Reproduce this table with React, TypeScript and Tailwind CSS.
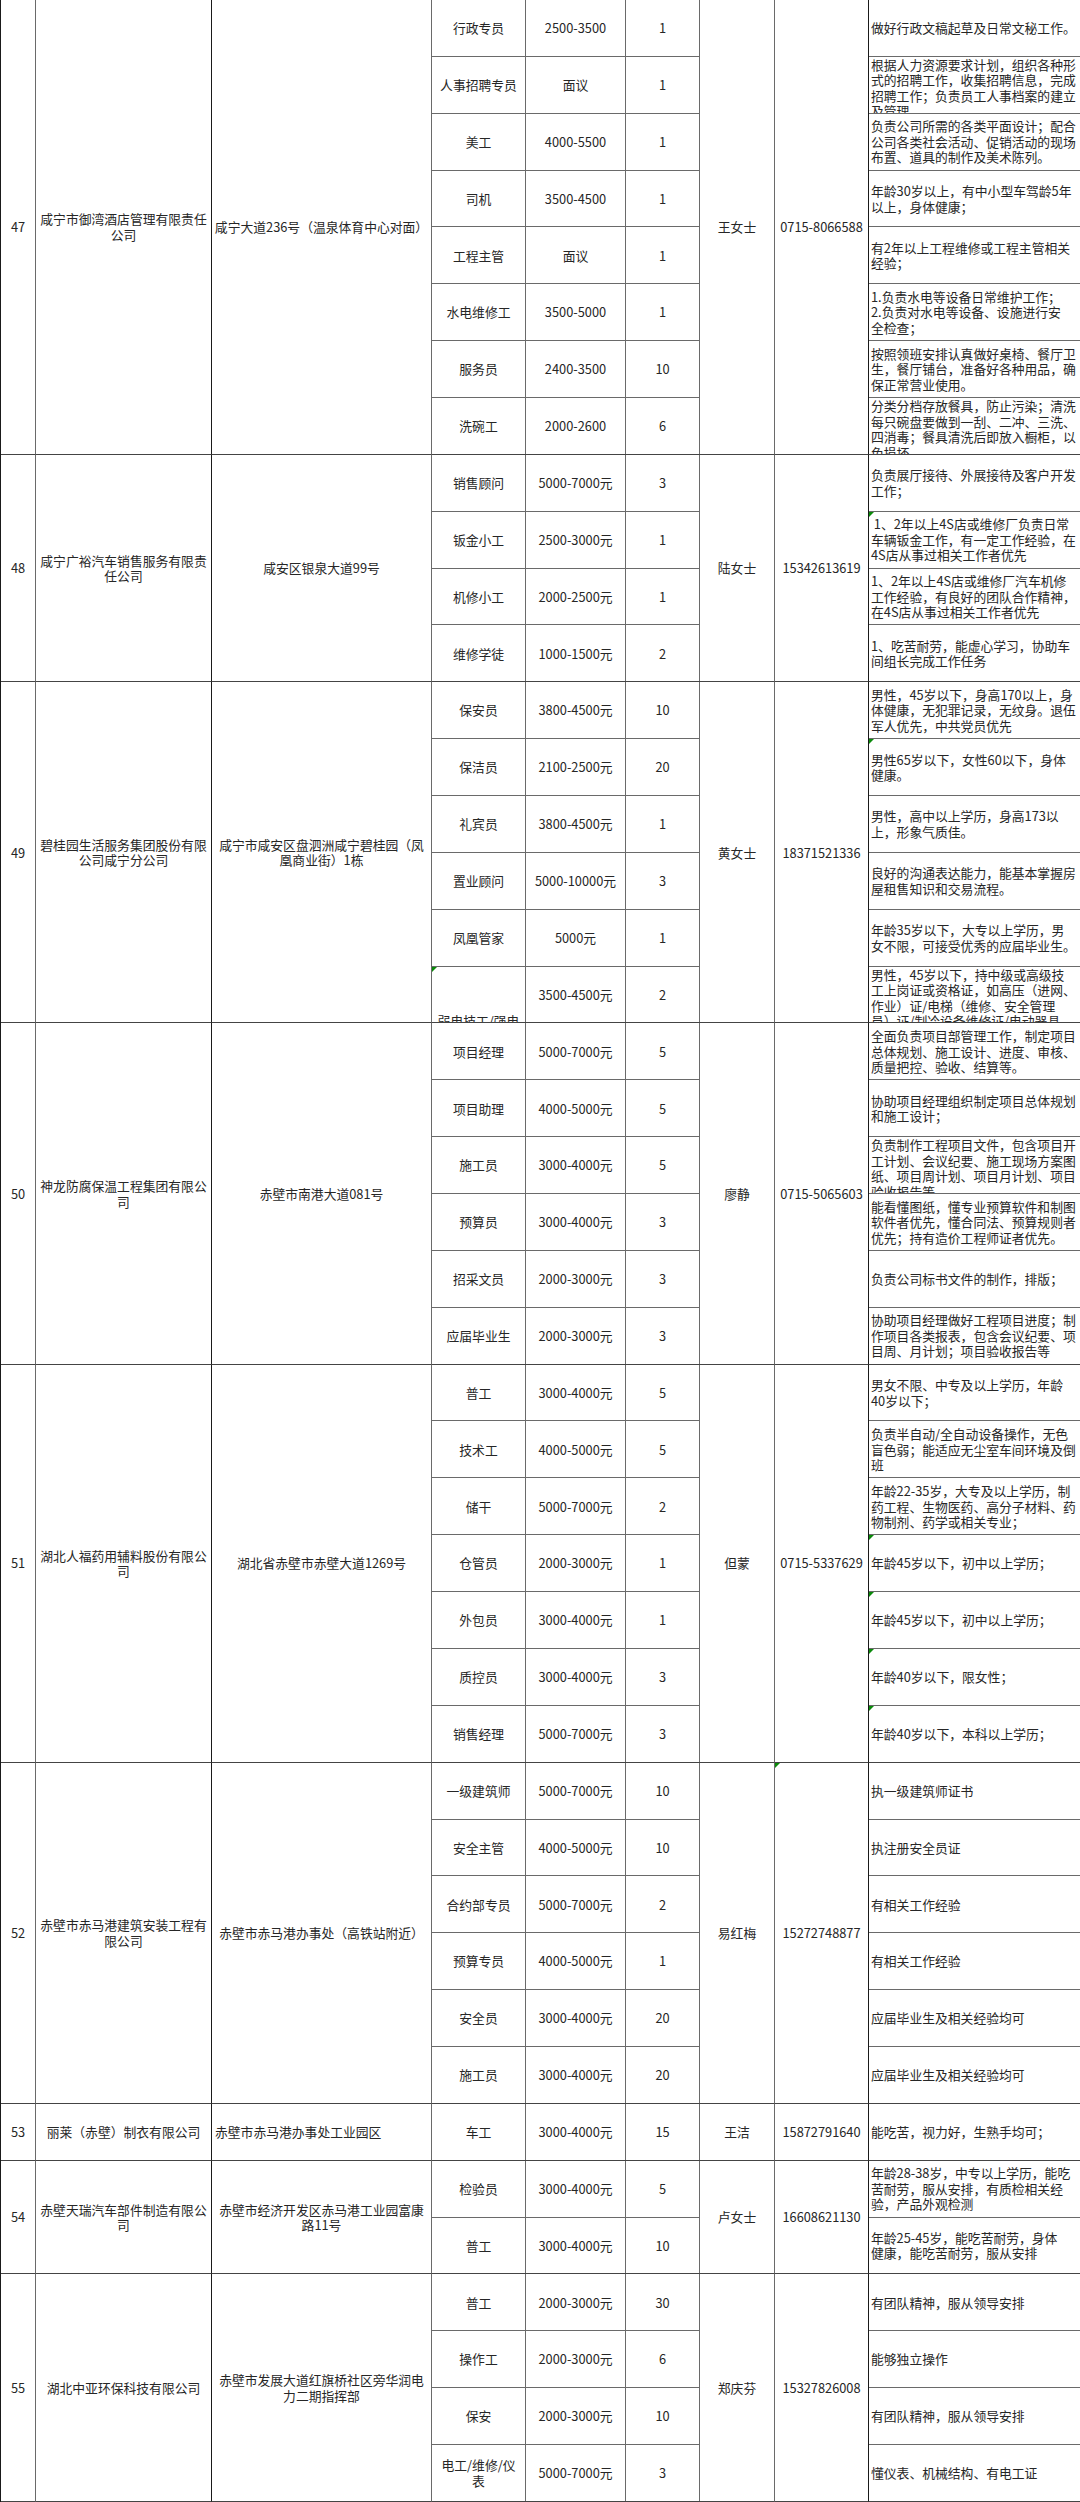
type Job = {
  title: string;
  pay: string;
  num: string;
  req: string;
  mark?: boolean;
  titleMark?: boolean;
  titleLow?: boolean;
};

type Company = {
  no: string;
  name: string;
  addr: string;
  addrLeft?: boolean;
  contact: string;
  phone: string;
  phoneMark?: boolean;
  jobs: Job[];
};

const companies: Company[] = [
  {
    no: '47',
    name: '咸宁市御湾酒店管理有限责任\n公司',
    addr: '咸宁大道236号（温泉体育中心对面）',
    contact: '王女士',
    phone: '0715-8066588',
    jobs: [
      { title: '行政专员', pay: '2500-3500', num: '1', req: '做好行政文稿起草及日常文秘工作。' },
      {
        title: '人事招聘专员',
        pay: '面议',
        num: '1',
        req: '根据人力资源要求计划，组织各种形\n式的招聘工作，收集招聘信息，完成\n招聘工作；负责员工人事档案的建立\n及管理。',
      },
      {
        title: '美工',
        pay: '4000-5500',
        num: '1',
        req: '负责公司所需的各类平面设计；配合\n公司各类社会活动、促销活动的现场\n布置、道具的制作及美术陈列。',
      },
      { title: '司机', pay: '3500-4500', num: '1', req: '年龄30岁以上，有中小型车驾龄5年\n以上，身体健康；' },
      { title: '工程主管', pay: '面议', num: '1', req: '有2年以上工程维修或工程主管相关\n经验；' },
      {
        title: '水电维修工',
        pay: '3500-5000',
        num: '1',
        req: '1.负责水电等设备日常维护工作；\n2.负责对水电等设备、设施进行安\n全检查；',
      },
      {
        title: '服务员',
        pay: '2400-3500',
        num: '10',
        req: '按照领班安排认真做好桌椅、餐厅卫\n生，餐厅铺台，准备好各种用品，确\n保正常营业使用。',
      },
      {
        title: '洗碗工',
        pay: '2000-2600',
        num: '6',
        req: '分类分档存放餐具，防止污染；清洗\n每只碗盘要做到一刮、二冲、三洗、\n四消毒；餐具清洗后即放入橱柜，以\n免损坏。',
      },
    ],
  },
  {
    no: '48',
    name: '咸宁广裕汽车销售服务有限责\n任公司',
    addr: '咸安区银泉大道99号',
    contact: '陆女士',
    phone: '15342613619',
    jobs: [
      { title: '销售顾问', pay: '5000-7000元', num: '3', req: '负责展厅接待、外展接待及客户开发\n工作；' },
      {
        title: '钣金小工',
        pay: '2500-3000元',
        num: '1',
        mark: true,
        req: '\u00a01、2年以上4S店或维修厂负责日常\n车辆钣金工作，有一定工作经验，在\n4S店从事过相关工作者优先',
      },
      {
        title: '机修小工',
        pay: '2000-2500元',
        num: '1',
        req: '1、2年以上4S店或维修厂汽车机修\n工作经验，有良好的团队合作精神，\n在4S店从事过相关工作者优先',
      },
      { title: '维修学徒', pay: '1000-1500元', num: '2', req: '1、吃苦耐劳，能虚心学习，协助车\n间组长完成工作任务' },
    ],
  },
  {
    no: '49',
    name: '碧桂园生活服务集团股份有限\n公司咸宁分公司',
    addr: '咸宁市咸安区盘泗洲咸宁碧桂园（凤\n凰商业街）1栋',
    contact: '黄女士',
    phone: '18371521336',
    jobs: [
      {
        title: '保安员',
        pay: '3800-4500元',
        num: '10',
        req: '男性，45岁以下，身高170以上，身\n体健康，无犯罪记录，无纹身。退伍\n军人优先，中共党员优先',
      },
      { title: '保洁员', pay: '2100-2500元', num: '20', mark: true, req: '男性65岁以下，女性60以下，身体\n健康。' },
      { title: '礼宾员', pay: '3800-4500元', num: '1', req: '男性，高中以上学历，身高173以\n上，形象气质佳。' },
      { title: '置业顾问', pay: '5000-10000元', num: '3', req: '良好的沟通表达能力，能基本掌握房\n屋租售知识和交易流程。' },
      { title: '凤凰管家', pay: '5000元', num: '1', req: '年龄35岁以下，大专以上学历，男\n女不限，可接受优秀的应届毕业生。' },
      {
        title: '弱电技工/强电\n工',
        pay: '3500-4500元',
        num: '2',
        titleMark: true,
        titleLow: true,
        req: '男性，45岁以下，持中级或高级技\n工上岗证或资格证，如高压（进网、\n作业）证/电梯（维修、安全管理\n员）证/制冷设备维修证/电动器具\n维修证优先。',
      },
    ],
  },
  {
    no: '50',
    name: '神龙防腐保温工程集团有限公\n司',
    addr: '赤壁市南港大道081号',
    contact: '廖静',
    phone: '0715-5065603',
    jobs: [
      {
        title: '项目经理',
        pay: '5000-7000元',
        num: '5',
        req: '全面负责项目部管理工作，制定项目\n总体规划、施工设计、进度、审核、\n质量把控、验收、结算等。',
      },
      { title: '项目助理', pay: '4000-5000元', num: '5', req: '协助项目经理组织制定项目总体规划\n和施工设计；' },
      {
        title: '施工员',
        pay: '3000-4000元',
        num: '5',
        req: '负责制作工程项目文件，包含项目开\n工计划、会议纪要、施工现场方案图\n纸、项目周计划、项目月计划、项目\n验收报告等。',
      },
      {
        title: '预算员',
        pay: '3000-4000元',
        num: '3',
        req: '能看懂图纸，懂专业预算软件和制图\n软件者优先，懂合同法、预算规则者\n优先；持有造价工程师证者优先。',
      },
      { title: '招采文员', pay: '2000-3000元', num: '3', req: '负责公司标书文件的制作，排版；' },
      {
        title: '应届毕业生',
        pay: '2000-3000元',
        num: '3',
        req: '协助项目经理做好工程项目进度；制\n作项目各类报表，包含会议纪要、项\n目周、月计划；项目验收报告等',
      },
    ],
  },
  {
    no: '51',
    name: '湖北人福药用辅料股份有限公\n司',
    addr: '湖北省赤壁市赤壁大道1269号',
    contact: '但蒙',
    phone: '0715-5337629',
    jobs: [
      { title: '普工', pay: '3000-4000元', num: '5', req: '男女不限、中专及以上学历，年龄\n40岁以下；' },
      {
        title: '技术工',
        pay: '4000-5000元',
        num: '5',
        req: '负责半自动/全自动设备操作，无色\n盲色弱；能适应无尘室车间环境及倒\n班',
      },
      {
        title: '储干',
        pay: '5000-7000元',
        num: '2',
        req: '年龄22-35岁，大专及以上学历，制\n药工程、生物医药、高分子材料、药\n物制剂、药学或相关专业；',
      },
      { title: '仓管员', pay: '2000-3000元', num: '1', mark: true, req: '年龄45岁以下，初中以上学历；' },
      { title: '外包员', pay: '3000-4000元', num: '1', mark: true, req: '年龄45岁以下，初中以上学历；' },
      { title: '质控员', pay: '3000-4000元', num: '3', mark: true, req: '年龄40岁以下，限女性；' },
      { title: '销售经理', pay: '5000-7000元', num: '3', mark: true, req: '年龄40岁以下，本科以上学历；' },
    ],
  },
  {
    no: '52',
    name: '赤壁市赤马港建筑安装工程有\n限公司',
    addr: '赤壁市赤马港办事处（高铁站附近）',
    contact: '易红梅',
    phone: '15272748877',
    phoneMark: true,
    jobs: [
      { title: '一级建筑师', pay: '5000-7000元', num: '10', req: '执一级建筑师证书' },
      { title: '安全主管', pay: '4000-5000元', num: '10', req: '执注册安全员证' },
      { title: '合约部专员', pay: '5000-7000元', num: '2', req: '有相关工作经验' },
      { title: '预算专员', pay: '4000-5000元', num: '1', req: '有相关工作经验' },
      { title: '安全员', pay: '3000-4000元', num: '20', req: '应届毕业生及相关经验均可' },
      { title: '施工员', pay: '3000-4000元', num: '20', req: '应届毕业生及相关经验均可' },
    ],
  },
  {
    no: '53',
    name: '丽莱（赤壁）制衣有限公司',
    addr: '赤壁市赤马港办事处工业园区',
    addrLeft: true,
    contact: '王洁',
    phone: '15872791640',
    jobs: [{ title: '车工', pay: '3000-4000元', num: '15', req: '能吃苦，视力好，生熟手均可；' }],
  },
  {
    no: '54',
    name: '赤壁天瑞汽车部件制造有限公\n司',
    addr: '赤壁市经济开发区赤马港工业园富康\n路11号',
    contact: '卢女士',
    phone: '16608621130',
    jobs: [
      {
        title: '检验员',
        pay: '3000-4000元',
        num: '5',
        req: '年龄28-38岁，中专以上学历，能吃\n苦耐劳，服从安排，有质检相关经\n验，产品外观检测',
      },
      { title: '普工', pay: '3000-4000元', num: '10', req: '年龄25-45岁，能吃苦耐劳，身体\n健康，能吃苦耐劳，服从安排' },
    ],
  },
  {
    no: '55',
    name: '湖北中亚环保科技有限公司',
    addr: '赤壁市发展大道红旗桥社区旁华润电\n力二期指挥部',
    contact: '郑庆芬',
    phone: '15327826008',
    jobs: [
      { title: '普工', pay: '2000-3000元', num: '30', req: '有团队精神，服从领导安排' },
      { title: '操作工', pay: '2000-3000元', num: '6', req: '能够独立操作' },
      { title: '保安', pay: '2000-3000元', num: '10', req: '有团队精神，服从领导安排' },
      { title: '电工/维修/仪\n表', pay: '5000-7000元', num: '3', req: '懂仪表、机械结构、有电工证' },
    ],
  },
];

function Mark() {
  return (
    <span className="absolute left-0 top-0 h-0 w-0 border-t-[5px] border-r-[5px] border-t-[#0a8a0a] border-r-transparent" />
  );
}

function CompanyBlock({ c }: { c: Company }) {
  return (
    <div className="flex border-l border-l-[#1a1a1a]">
      {/* merged cells on the left */}
      <div className="flex w-[35px] shrink-0 items-center justify-center border-r border-b border-r-[#6a6a6a] border-b-[#444]">
        {c.no}
      </div>
      <div className="flex w-[176px] shrink-0 items-center justify-center whitespace-pre border-r border-b border-r-[#1a1a1a] border-b-[#444] text-center">
        {c.name}
      </div>
      <div
        className={`flex w-[220px] shrink-0 items-center overflow-hidden whitespace-pre border-r border-b border-r-[#6a6a6a] border-b-[#444] ${
          c.addrLeft ? 'justify-start pl-[3px] text-left' : 'justify-center text-center'
        }`}
      >
        {c.addr}
      </div>

      {/* position / pay / count rows */}
      <div className="flex w-[268px] shrink-0 flex-col">
        {c.jobs.map((j, i) => (
          <div key={i} className="flex h-[56.86px] border-b border-b-[#6a6a6a] last:border-b-[#444]">
            <div
              className={`relative flex w-[94px] shrink-0 flex-col overflow-hidden whitespace-pre border-r border-r-[#6a6a6a] text-center ${
                j.titleLow ? 'justify-start pt-[46px]' : 'justify-center'
              }`}
            >
              {j.titleMark && <Mark />}
              {j.title}
            </div>
            <div className="flex w-[100px] shrink-0 items-center justify-center whitespace-nowrap border-r border-r-[#6a6a6a]">
              {j.pay}
            </div>
            <div className="flex w-[74px] shrink-0 items-center justify-center border-r border-r-[#6a6a6a]">
              {j.num}
            </div>
          </div>
        ))}
      </div>

      <div className="flex w-[75px] shrink-0 items-center justify-center border-r border-b border-r-[#6a6a6a] border-b-[#444]">
        {c.contact}
      </div>
      <div className="relative flex w-[94px] shrink-0 items-center justify-center border-r border-b border-r-[#1a1a1a] border-b-[#444]">
        {c.phoneMark && <Mark />}
        {c.phone}
      </div>

      {/* requirement rows */}
      <div className="flex min-w-0 flex-1 flex-col">
        {c.jobs.map((j, i) => (
          <div
            key={i}
            className="relative flex h-[56.86px] flex-col overflow-hidden whitespace-pre border-b border-b-[#6a6a6a] pl-[2px] text-left [justify-content:safe_center] last:border-b-[#444]"
          >
            {j.mark && <Mark />}
            {j.req}
          </div>
        ))}
      </div>
    </div>
  );
}

export default function App() {
  return (
    <div className="w-[1080px] bg-white font-['Noto_Sans_CJK_SC','Noto_Sans',sans-serif] text-[12.8px] leading-[15.5px] text-[#262626]">
      {companies.map((c) => (
        <CompanyBlock key={c.no} c={c} />
      ))}
    </div>
  );
}
